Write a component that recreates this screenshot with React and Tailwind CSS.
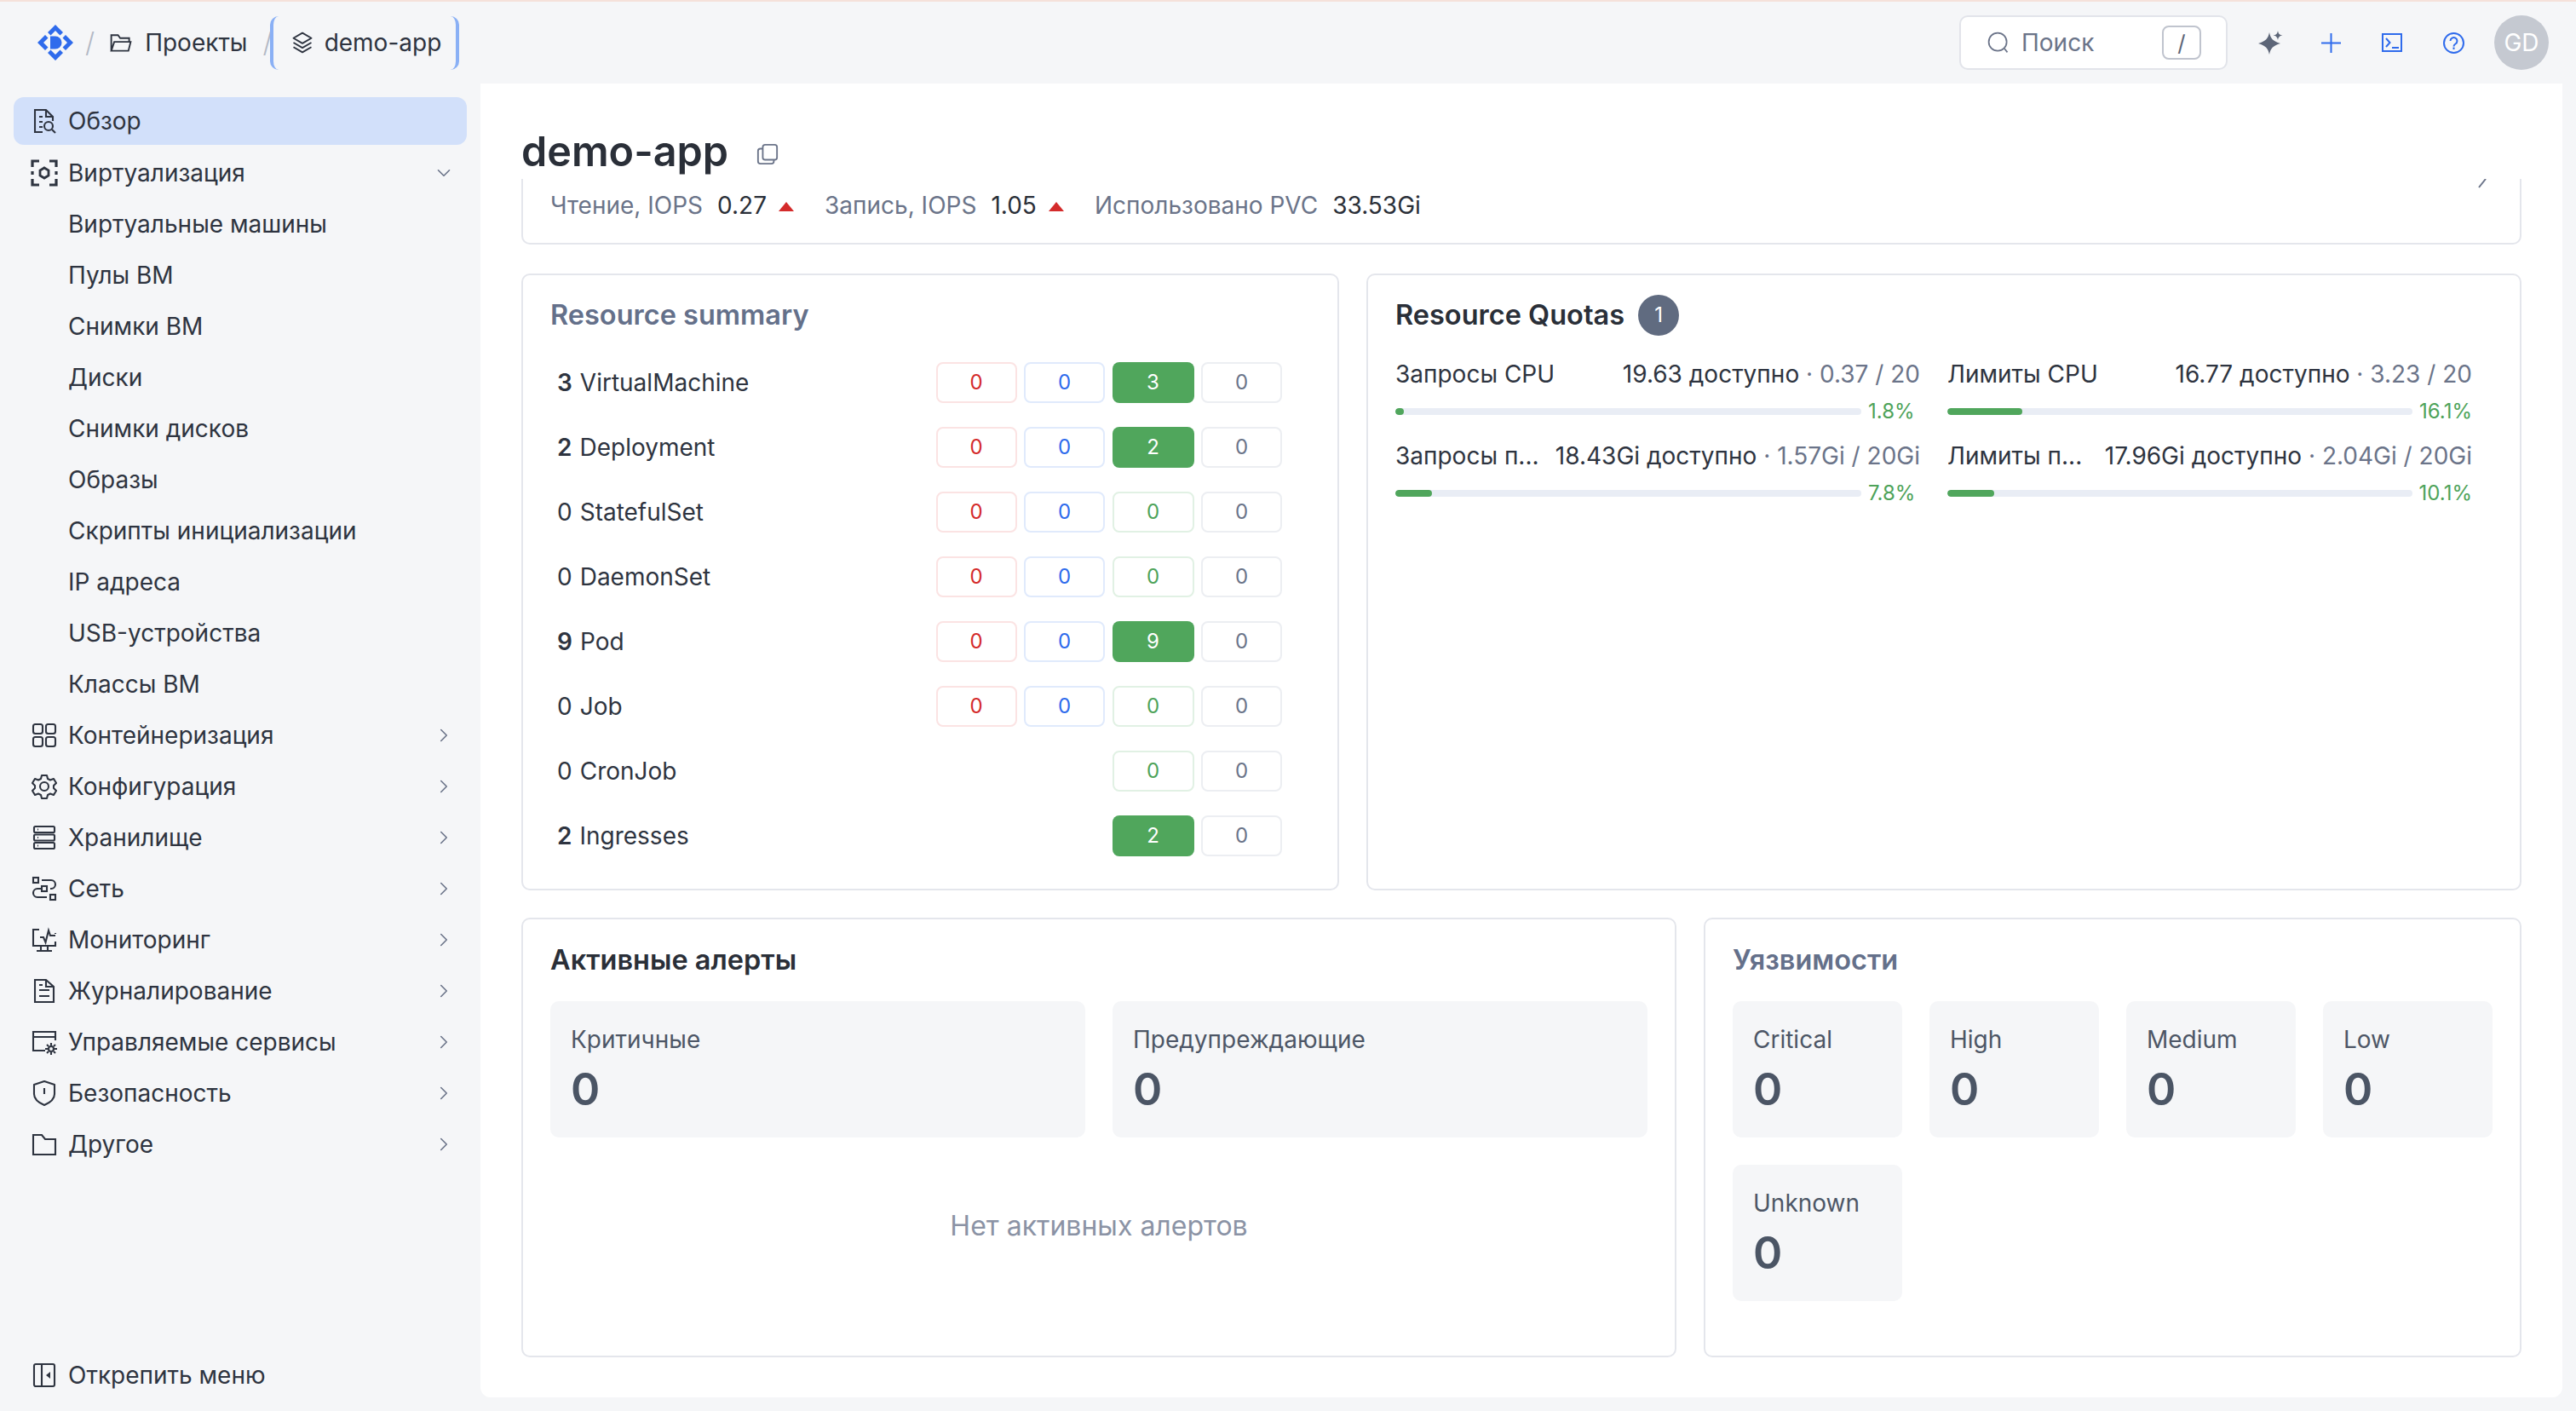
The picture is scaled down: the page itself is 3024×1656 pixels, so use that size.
import React from "react";
import { ChevronDown, ChevronRight } from "lucide-react";

// thin outline icons, 32 unit grid
const Svg = ({ size = 32, className = "", sw = 2.1, children }) => (
  <svg width={size} height={size} viewBox="0 0 32 32" fill="none" stroke="currentColor" strokeWidth={sw} className={`shrink-0 ${className}`}>
    {children}
  </svg>
);

const Logo = () => (
  <svg width="44" height="44" viewBox="0 0 44 44" fill="#2f6bec" className="shrink-0">
    <path d="M22 1 L31 10 L27.5 13.5 L22 8 L16.5 13.5 L13 10 Z" />
    <path d="M22 43 L31 34 L27.5 30.5 L22 36 L16.5 30.5 L13 34 Z" />
    <path d="M1 22 L10 13 L13.5 16.5 L8 22 L13.5 27.5 L10 31 Z" />
    <path d="M43 22 L34 13 L30.5 16.5 L36 22 L30.5 27.5 L34 31 Z" />
    <path d="M16 14.5 H22 A7.5 7.5 0 0 1 22 29.5 H16 Z" />
  </svg>
);

const IconOverview = () => (
  <Svg>
    <path d="M14 29H5V3h13l8 8v5" />
    <path d="M18 3v8h8M10 11h4M10 17h4M10 23h4" />
    <circle cx="21" cy="22" r="5" />
    <path d="M25 26l4 4" />
  </Svg>
);
const IconVirt = () => (
  <Svg sw={3.2}>
    <path d="M2 9V2h8M22 2h8v7M30 23v7h-8M10 30H2v-7M2 14v4M30 14v4" />
    <path d="M16 10l5 3v6l-5 3-5-3v-6z" strokeWidth="2.8" />
  </Svg>
);
const IconGrid = () => (
  <Svg>
    <rect x="3" y="3" width="11" height="11" rx="2.5" />
    <rect x="18" y="3" width="11" height="11" rx="2.5" />
    <rect x="3" y="18" width="11" height="11" rx="2.5" />
    <rect x="18" y="18" width="11" height="11" rx="2.5" />
  </Svg>
);
const IconGear = () => (
  <Svg>
    <circle cx="16" cy="16" r="5" />
    <path d="M13 3h6l1 4 3 1.5 4-1.5 3 5-3 3v3l3 3-3 5-4-1.5-3 1.5-1 4h-6l-1-4-3-1.500-4 1.500-3-5 3-3v-3l-3-3 3-5 4 1.500 3-1.500z" strokeLinejoin="round" />
  </Svg>
);
const IconStorage = () => (
  <Svg>
    <rect x="4" y="3" width="24" height="7" rx="1.5" />
    <rect x="4" y="12.5" width="24" height="7" rx="1.5" />
    <rect x="4" y="22" width="24" height="7" rx="1.5" />
    <path d="M8 6.500h1M8 16h1M8 25.500h1" />
  </Svg>
);
const IconNetwork = () => (
  <Svg>
    <rect x="3" y="3" width="6" height="6" />
    <rect x="13" y="13" width="6" height="6" />
    <rect x="23" y="23" width="6" height="6" />
    <path d="M13 6h11a5 5 0 0 1 0 10h-1M13 16H8a5 5 0 0 0 0 10h11" />
  </Svg>
);
const IconMonitor = () => (
  <Svg>
    <path d="M10 4H3v19h26v-5M29 9V8" />
    <path d="M11 13h4l2.500 6 3.500-14 2 6h6" />
    <path d="M12 23v6M20 23v6M7 29h18" />
  </Svg>
);
const IconLog = () => (
  <Svg>
    <path d="M18 3H5v26h22V11z" />
    <path d="M18 3v8h9M10 15h12M10 22h12M10 9h4" />
  </Svg>
);
const IconManaged = () => (
  <Svg>
    <path d="M17 26H3V4h26v10M3 10h26" />
    <circle cx="24" cy="24" r="3" />
    <path d="M24 17v3M24 28v3M17 24h3M28 24h3M19 19l2 2M27 27l2 2M29 19l-2 2M21 27l-2 2" />
  </Svg>
);
const IconShield = () => (
  <Svg>
    <path d="M16 2l12 4v11c0 6-5 10-12 13C9 27 4 23 4 17V6z" strokeLinejoin="round" />
    <path d="M16 10v7" />
  </Svg>
);
const IconFolder = () => (
  <Svg>
    <path d="M3 5h10l4 5h12v18H3z" />
  </Svg>
);
const IconPin = () => (
  <Svg>
    <rect x="4" y="3" width="24" height="26" rx="2" />
    <path d="M13 3v26" />
    <path d="M23 12v8l-5-4z" fill="currentColor" stroke="none" />
  </Svg>
);

const NAV = [
  { label: "Виртуализация", icon: IconVirt, open: true },
  { label: "Виртуальные машины", sub: true },
  { label: "Пулы ВМ", sub: true },
  { label: "Снимки ВМ", sub: true },
  { label: "Диски", sub: true },
  { label: "Снимки дисков", sub: true },
  { label: "Образы", sub: true },
  { label: "Скрипты инициализации", sub: true },
  { label: "IP адреса", sub: true },
  { label: "USB-устройства", sub: true },
  { label: "Классы ВМ", sub: true },
  { label: "Контейнеризация", icon: IconGrid },
  { label: "Конфигурация", icon: IconGear },
  { label: "Хранилище", icon: IconStorage },
  { label: "Сеть", icon: IconNetwork },
  { label: "Мониторинг", icon: IconMonitor },
  { label: "Журналирование", icon: IconLog },
  { label: "Управляемые сервисы", icon: IconManaged },
  { label: "Безопасность", icon: IconShield },
  { label: "Другое", icon: IconFolder },
];

const SUMMARY = [
  { n: 3, name: "VirtualMachine", cells: [0, 0, 3, 0] },
  { n: 2, name: "Deployment", cells: [0, 0, 2, 0] },
  { n: 0, name: "StatefulSet", cells: [0, 0, 0, 0] },
  { n: 0, name: "DaemonSet", cells: [0, 0, 0, 0] },
  { n: 9, name: "Pod", cells: [0, 0, 9, 0] },
  { n: 0, name: "Job", cells: [0, 0, 0, 0] },
  { n: 0, name: "CronJob", cells: [null, null, 0, 0] },
  { n: 2, name: "Ingresses", cells: [null, null, 2, 0] },
];

const CELL_STYLES = [
  "border-[#fbe3e3] text-[#d42b2b]",
  "border-[#e0eafc] text-[#2f6bec]",
  "border-[#e1f1e4] text-[#4ea35a]",
  "border-[#eceef2] text-[#6b7489]",
];

const QUOTAS = [
  { label: "Запросы CPU", avail: "19.63 доступно", used: "0.37 / 20", pct: 1.8 },
  { label: "Лимиты CPU", avail: "16.77 доступно", used: "3.23 / 20", pct: 16.1 },
  { label: "Запросы п...", avail: "18.43Gi доступно", used: "1.57Gi / 20Gi", pct: 7.8 },
  { label: "Лимиты п...", avail: "17.96Gi доступно", used: "2.04Gi / 20Gi", pct: 10.1 },
];

const Card = ({ className = "", children }) => (
  <div className={`border-2 border-[#e4e6ec] rounded-[10px] bg-white ${className}`}>{children}</div>
);

const Tile = ({ label }) => (
  <div className="h-[160px] bg-[#f5f6f8] rounded-[10px] px-[24px] pt-[28px]">
    <div className="text-[28px] leading-[34px] text-[#4d5666]">{label}</div>
    <div className="text-[52px] leading-[64px] mt-[10px] font-semibold text-[#4b5565]">0</div>
  </div>
);

const Triangle = () => (
  <span className="w-0 h-0 border-x-[9px] border-x-transparent border-b-[11px] border-b-[#d42b2b] mt-[2px]" />
);

const Metric = ({ label, value, up, className = "" }) => (
  <div className={`flex items-center ${className}`}>
    <span className="text-[#6b7489]">{label}</span>
    <span className="ml-[17px] text-[#2a2f38]">{value}</span>
    {up && <span className="ml-[14px] flex"><Triangle /></span>}
  </div>
);

const Sidebar = () => (
  <aside className="w-[564px] shrink-0 relative pl-[16px] pr-[16px] pt-[16px] text-[#2e3440]">
    <div className="h-[56px] bg-[#d2e0fa] rounded-[12px] flex items-center pl-[20px] gap-[12px] text-[28px] mb-[3px]">
      <IconOverview />
      <span>Обзор</span>
    </div>
    {NAV.map(({ label, icon: Icon, sub, open }) => (
      <div key={label} className="h-[60px] flex items-center pl-[20px] pr-[14px] gap-[12px] text-[28px]">
        {Icon ? <Icon /> : <span className="w-[32px]" />}
        <span className="flex-1">{label}</span>
        {!sub && (open
          ? <ChevronDown size={26} strokeWidth={1.5} className="text-[#6b7489]" />
          : <ChevronRight size={26} strokeWidth={1.5} className="text-[#6b7489]" />)}
      </div>
    ))}
    <div className="absolute left-[36px] bottom-[18px] flex items-center gap-[12px] text-[28px] h-[48px]">
      <IconPin />
      <span>Открепить меню</span>
    </div>
  </aside>
);

const Header = () => (
  <header className="h-[96px] shrink-0 flex items-center pl-[43px] pr-[32px] text-[#2e3440]">
    <Logo />
    <span className="ml-[13px] text-[32px] text-[#b3b9c5] font-light">/</span>
    <div className="ml-[17px] flex items-center gap-[14px] text-[28px]">
      <svg width="28" height="28" viewBox="0 0 32 32" fill="none" stroke="currentColor" strokeWidth="2.2" className="shrink-0">
        <path d="M3 27V6h9l3 4h12v5M3 27h23l3-12H7z" />
      </svg>
      <span>Проекты</span>
    </div>
    <span className="ml-[18px] -mr-[3px] text-[32px] text-[#b3b9c5] font-light">/</span>
    <div className="h-[63px] w-[222px] flex items-center gap-[12px] pl-[20px] text-[28px] rounded-[10px] border-x-4 border-[#8ab0f5]">
      <svg width="28" height="28" viewBox="0 0 32 32" fill="none" stroke="currentColor" strokeWidth="2.2" className="shrink-0">
        <path d="M16 3l12 7-12 7-12-7zM4 16l12 7 12-7M4 22l12 7 12-7" strokeLinejoin="round" />
      </svg>
      <span>demo-app</span>
    </div>
    <div className="ml-auto w-[315px] h-[64px] bg-white border-2 border-[#e2e4ea] rounded-[10px] flex items-center pl-[30px] pr-[29px] text-[28px] text-[#6b7489]">
      <svg width="28" height="28" viewBox="0 0 32 32" fill="none" stroke="currentColor" strokeWidth="2" className="shrink-0">
        <circle cx="15" cy="15" r="12" />
        <path d="M24 24l4 5" />
      </svg>
      <span className="ml-[13px]">Поиск</span>
      <span className="ml-auto w-[46px] h-[40px] border-2 border-[#c0c4ce] rounded-[8px] flex items-center justify-center text-[26px] text-[#5d6678]">/</span>
    </div>
    <svg width="30" height="30" viewBox="0 0 30 30" fill="#5d6678" className="ml-[36px] shrink-0">
      <path d="M13 3c1.500 7.500 4 10 13 13-9 3-11.500 5.500-13 13-1.500-7.500-4-10-13-13 9-3 11.500-5.500 13-13z" />
      <path d="M23 1c.6 3.500 2 5 5.500 5.500-3.500.6-4.900 2-5.500 5.500-.6-3.500-2-4.900-5.500-5.500 3.500-.5 4.900-2 5.500-5.500z" />
    </svg>
    <svg width="23" height="23" viewBox="0 0 23 23" stroke="#2f6bec" strokeWidth="2" className="ml-[44px] shrink-0">
      <path d="M11.500 0v23M0 11.500h23" />
    </svg>
    <svg width="24" height="22" viewBox="0 0 24 22" fill="none" stroke="#2f6bec" strokeWidth="2" className="ml-[48px] shrink-0">
      <rect x="1" y="1" width="22" height="20" />
      <path d="M5 6l4.500 5-4.500 5M12 17h8" />
    </svg>
    <svg width="25" height="25" viewBox="0 0 25 25" fill="none" stroke="#2f6bec" strokeWidth="2" className="ml-[48px] shrink-0">
      <circle cx="12.500" cy="12.500" r="11.500" />
      <path d="M8.500 10a4 4 0 1 1 6 3.500c-1.500 1-2 1.500-2 3M12.500 17.500v2.500" />
    </svg>
    <div className="ml-[35px] w-[64px] h-[64px] rounded-full bg-[#c5c9d1] text-white text-[28px] flex items-center justify-center">GD</div>
  </header>
);

const ResourceSummary = () => (
  <Card className="w-[960px] h-[724px] px-[32px]">
    <h3 className="text-[32.5px] leading-[40px] font-semibold text-[#64708a] mt-[27px] mb-[35px]">Resource summary</h3>
    {SUMMARY.map((row) => (
      <div key={row.name} className="h-[48px] mb-[28px] flex items-center text-[28px] text-[#2e3440] pl-[8px]">
        <span className={row.n > 0 ? "font-semibold" : ""}>{row.n}</span>
        <span className="ml-[9px]">{row.name}</span>
        <div className="ml-auto mr-[33px] grid grid-cols-[95px_95px_96px_95px] gap-x-[8.500px]">
          {row.cells.map((v, i) =>
            v === null ? (
              <span key={i} />
            ) : i === 2 && v > 0 ? (
              <span key={i} className="h-[48px] rounded-[8px] bg-[#50a65c] text-white text-[24px] flex items-center justify-center">{v}</span>
            ) : (
              <span key={i} className={`h-[48px] rounded-[8px] border-2 bg-white text-[24px] flex items-center justify-center ${CELL_STYLES[i]}`}>{v}</span>
            )
          )}
        </div>
      </div>
    ))}
  </Card>
);

const ResourceQuotas = () => (
  <Card className="flex-1 h-[724px] pl-[32px] pr-[56px]">
    <div className="flex items-center gap-[16px] mt-[23px] mb-[26px]">
      <h3 className="text-[32.5px] leading-[48px] font-semibold text-[#2a2f38]">Resource Quotas</h3>
      <span className="w-[48px] h-[48px] rounded-full bg-[#606b80] text-white text-[24px] flex items-center justify-center">1</span>
    </div>
    <div className="grid grid-cols-2 gap-x-[32px] gap-y-[17px]">
      {QUOTAS.map((q) => (
        <div key={q.label}>
          <div className="flex justify-between text-[28px] leading-[38px] text-[#2e3440] whitespace-nowrap">
            <span>{q.label}</span>
            <span>
              {q.avail} <span className="text-[#6b7489]">· {q.used}</span>
            </span>
          </div>
          <div className="flex items-center mt-[9px] h-[32px]">
            <div className="w-[547px] h-[8px] rounded-full bg-[#e9edf5] overflow-hidden">
              <div className="h-full rounded-full bg-[#50a65c]" style={{ width: `${Math.max(q.pct, 1.8)}%` }} />
            </div>
            <span className="ml-[8px] text-[24px] text-[#4ea35a]">{q.pct}%</span>
          </div>
        </div>
      ))}
    </div>
  </Card>
);

const Alerts = () => (
  <Card className="w-[1356px] h-[516px] px-[32px]">
    <h3 className="text-[32.5px] leading-[40px] font-semibold text-[#2a2f38] mt-[28px] mb-[28px]">Активные алерты</h3>
    <div className="grid grid-cols-2 gap-[32px]">
      <Tile label="Критичные" />
      <Tile label="Предупреждающие" />
    </div>
    <div className="text-center text-[32px] leading-[40px] text-[#8b93a5] mt-[84px]">Нет активных алертов</div>
  </Card>
);

const Vulnerabilities = () => (
  <Card className="flex-1 h-[516px] px-[32px]">
    <h3 className="text-[32.5px] leading-[40px] font-semibold text-[#64708a] mt-[28px] mb-[28px]">Уязвимости</h3>
    <div className="grid grid-cols-4 gap-[32px]">
      {["Critical", "High", "Medium", "Low", "Unknown"].map((l) => (
        <Tile key={l} label={l} />
      ))}
    </div>
  </Card>
);

const App = () => (
  <div className="w-[3024px] h-[1656px] overflow-hidden bg-[#f5f6f8] flex flex-col border-t-2 border-[#f5e1da] font-['Inter',sans-serif]">
    <Header />
    <div className="flex flex-1 min-h-0">
      <Sidebar />
      <main className="w-[2444px] h-[1542px] bg-white rounded-b-[12px] px-[48px]">
        <div className="h-[112px] flex items-center pt-[48px]">
          <h1 className="text-[48.5px] font-semibold text-[#2a2f38]">demo-app</h1>
          <svg width="26" height="26" viewBox="0 0 28 28" fill="none" stroke="#6b7489" strokeWidth="2" className="ml-[33px] mt-[6px]">
            <rect x="8" y="2" width="18" height="19" rx="3" />
            <path d="M8 7H5a3 3 0 0 0-3 3v13a3 3 0 0 0 3 3h14a3 3 0 0 0 3-3v-2" />
          </svg>
        </div>
        <div className="relative h-[77px] border-x-2 border-b-2 border-[#e4e6ec] rounded-b-[10px] px-[32px] flex items-start pt-[13px] text-[28px] leading-[36px]">
          <Metric label="Чтение, IOPS" value="0.27" up className="w-[322px]" />
          <Metric label="Запись, IOPS" value="1.05" up className="w-[317px]" />
          <Metric label="Использовано PVC" value="33.53Gi" />
          {/* clipped tip of the edit icon */}
          <svg width="12" height="12" viewBox="0 0 12 12" stroke="#6b7489" strokeWidth="2" className="absolute right-[38px] top-0">
            <path d="M10 0L2 10" />
          </svg>
        </div>
        <div className="flex gap-[32px] mt-[34px]">
          <ResourceSummary />
          <ResourceQuotas />
        </div>
        <div className="flex gap-[32px] mt-[32px]">
          <Alerts />
          <Vulnerabilities />
        </div>
      </main>
    </div>
  </div>
);

export default App;
